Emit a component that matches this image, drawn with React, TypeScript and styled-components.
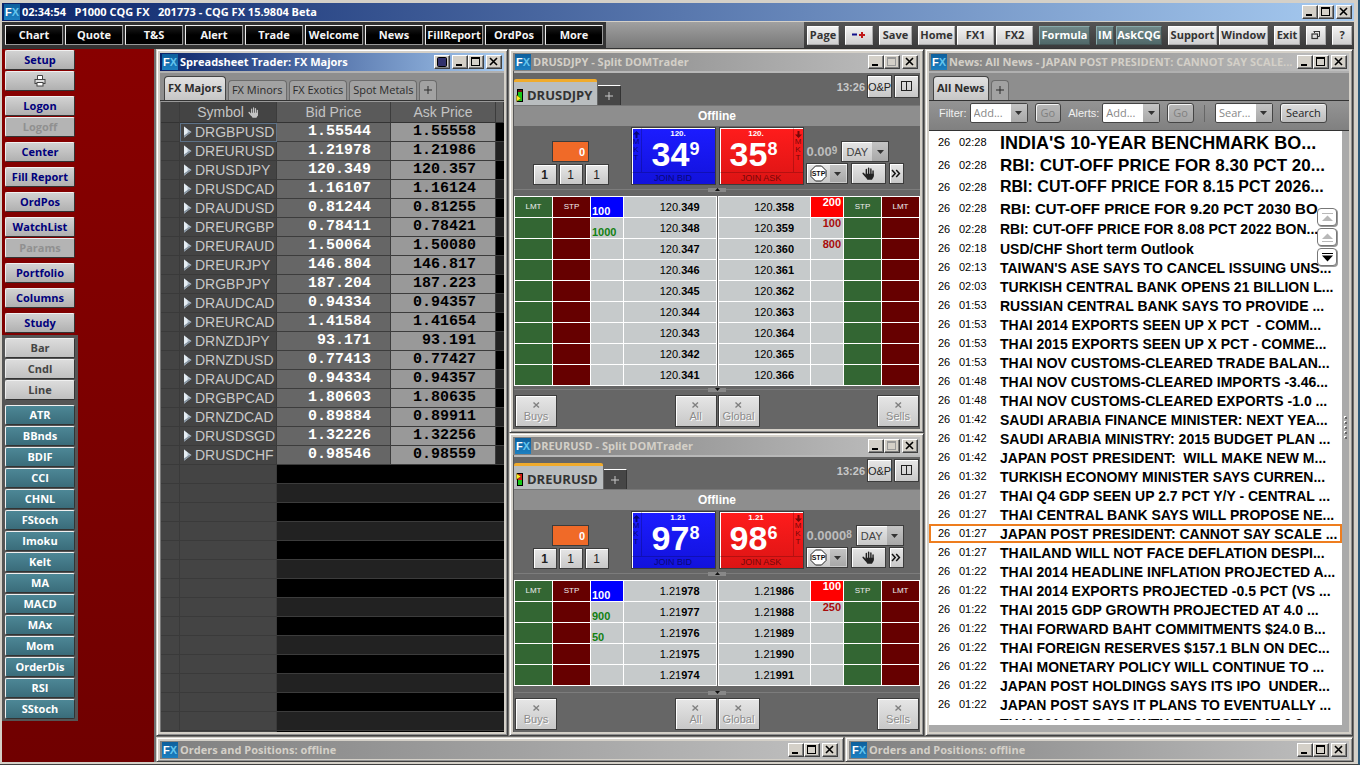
import React from "react";
import styled, { createGlobalStyle, css } from "styled-components";

const TAHOMA = `"Open Sans", "Noto Sans", sans-serif`;
const ARIAL = `"Liberation Sans", Arial, sans-serif`;
const MONO = `"Liberation Mono", "Courier New", monospace`;

const GlobalStyle = createGlobalStyle`
  * { box-sizing: border-box; }
  body { margin: 0; background: #d4d0c8; font: 11px/14px ${TAHOMA}; color: #000; }
  button, select, input { font: inherit; margin: 0; padding: 0; border-radius: 0; }
  button { cursor: pointer; }
  ul { margin: 0; padding: 0; list-style: none; }
`;

/* ---------- Application frame ---------- */

const AppFrame = styled.div`
  height: 100vh;
  display: flex;
  flex-direction: column;
  padding: 3px 4px 2px 2px;
  background: #d4d0c8;
  border-right: 2px solid #2b5878;
  border-bottom: 1px solid #404040;
  overflow: hidden;
`;

const Workspace = styled.div`
  flex: 1;
  min-height: 0;
  display: flex;
`;

/* ---------- Title bars ---------- */

const TitleBarBox = styled.header<{ $active?: boolean }>`
  flex: none;
  height: 18px;
  display: flex;
  align-items: center;
  gap: 2px;
  padding: 0 2px;
  font-weight: bold;
  color: ${(p) => (p.$active ? "#fff" : "#d4d0c8")};
  background: ${(p) =>
    p.$active
      ? "linear-gradient(90deg, #0a246a, #a6caf0)"
      : "linear-gradient(90deg, #808080, #c0c0c0)"};
`;

const TitleText = styled.h1`
  flex: 1;
  min-width: 0;
  margin: 0;
  font-size: 11px;
  line-height: 18px;
  font-weight: bold;
  white-space: pre;
  overflow: hidden;
`;

const Logo = styled.span`
  flex: none;
  width: 16px;
  height: 16px;
  text-align: center;
  font: bold 11px/16px ${ARIAL};
  color: #fff;
  background: linear-gradient(#0d5f9c, #1c7fc0);
  i {
    font-style: normal;
    color: #62c4ee;
  }
`;

const CaptionGroup = styled.span`
  display: flex;
`;

const CaptionButton = styled.button`
  width: 16px;
  height: 14px;
  display: flex;
  align-items: center;
  justify-content: center;
  background: #d4d0c8;
  color: #000;
  border: 1px solid;
  border-color: #fff #404040 #404040 #fff;
  box-shadow: inset -1px -1px #808080;
  &:disabled {
    color: #999;
  }
`;

const MinIcon = () => (
  <svg width="10" height="10" viewBox="0 0 10 10">
    <rect x="1" y="7" width="6" height="2" fill="currentColor" />
  </svg>
);
const MaxIcon = () => (
  <svg width="10" height="10" viewBox="0 0 10 10" shapeRendering="crispEdges">
    <path d="M0 0H9V9H0ZM1 2V8H8V2Z" fill="currentColor" fillRule="evenodd" />
  </svg>
);
const CloseIcon = () => (
  <svg width="10" height="10" viewBox="0 0 10 10">
    <path d="M1 1L8 8M8 1L1 8" stroke="currentColor" strokeWidth="1.6" />
  </svg>
);
const PinIcon = () => (
  <svg width="10" height="10" viewBox="0 0 10 10">
    <rect x="0.5" y="0.5" width="9" height="9" rx="1" fill="#31316b" stroke="#000" />
  </svg>
);

type TitleBarProps = {
  title: string;
  active?: boolean;
  pin?: boolean;
  maxDisabled?: boolean;
};

function TitleBar({ title, active, pin, maxDisabled }: TitleBarProps) {
  return (
    <TitleBarBox $active={active}>
      <Logo>
        F<i>X</i>
      </Logo>
      <TitleText>{title}</TitleText>
      {pin && (
        <CaptionButton aria-label="Link color">
          <PinIcon />
        </CaptionButton>
      )}
      <CaptionGroup>
        <CaptionButton aria-label="Minimize">
          <MinIcon />
        </CaptionButton>
        <CaptionButton aria-label="Maximize" disabled={maxDisabled}>
          <MaxIcon />
        </CaptionButton>
      </CaptionGroup>
      <CaptionButton aria-label="Close">
        <CloseIcon />
      </CaptionButton>
    </TitleBarBox>
  );
}

/* ---------- Top tool bar ---------- */

const ToolBar = styled.nav`
  flex: none;
  height: 28px;
  display: flex;
  justify-content: space-between;
  border-top: 1px solid #d4d0c8;
  border-bottom: 1px solid #333;
  background: linear-gradient(#a0a0a0, #787878);
`;

const MenuGroup = styled.div`
  display: flex;
  align-items: center;
  gap: 2px;
  padding: 0 3px;
  background: #333;
`;

const MenuButton = styled.button`
  width: 58px;
  height: 20px;
  font-weight: bold;
  color: #f4f4f4;
  background: linear-gradient(#1c1c1c, #000 50%);
  border: 1px solid #ddd;
  border-color: #eee #999 #999 #eee;
  white-space: nowrap;
`;

const ToolGroup = styled.div`
  flex: 0 0 550px;
  display: flex;
  align-items: center;
  justify-content: space-between;
  padding: 0 2px 0 3px;
  background: linear-gradient(#555, #3a3a3a);
`;

const ToolCluster = styled.div`
  display: flex;
  gap: 2px;
`;

const ToolButton = styled.button<{ $w: number; $teal?: boolean }>`
  width: ${(p) => p.$w}px;
  height: 19px;
  display: flex;
  align-items: center;
  justify-content: center;
  font-weight: bold;
  white-space: nowrap;
  color: ${(p) => (p.$teal ? "#fff" : "#333")};
  background: ${(p) =>
    p.$teal ? "linear-gradient(#708888, #506868)" : "linear-gradient(#f2f2f2, #cfcfcf)"};
  border: 1px solid;
  border-color: ${(p) => (p.$teal ? "#8aa #455 #455 #8aa" : "#fff #aaa #aaa #fff")};
`;

const menuItems = ["Chart", "Quote", "T&S", "Alert", "Trade", "Welcome", "News", "FillReport", "OrdPos", "More"];

type Tool = { label: React.ReactNode; w: number; teal?: boolean; name?: string };

const PlusMinus = () => (
  <svg width="16" height="10" viewBox="0 0 16 10">
    <path d="M1 4.5H6" stroke="#11118a" strokeWidth="2" />
    <path d="M8 5H14M11 2V8" stroke="#c01818" strokeWidth="2" />
  </svg>
);
const RestoreIcon = () => (
  <svg width="10" height="10" viewBox="0 0 10 10" fill="none" stroke="#333">
    <path d="M3.5 3V1.5H8.5V6.5H7" />
    <path d="M2.5 1.5H9" strokeWidth="1" />
    <rect x="1" y="4" width="5.5" height="4.5" strokeWidth="1.2" />
  </svg>
);

const toolClusters: Tool[][] = [
  [{ label: "Page", w: 32 }],
  [{ label: <PlusMinus />, w: 28, name: "Add or remove page" }],
  [{ label: "Save", w: 33 }],
  [{ label: "Home", w: 37 }, { label: "FX1", w: 37 }, { label: "FX2", w: 37 }],
  [{ label: "Formula", w: 51, teal: true }],
  [{ label: "IM", w: 18, teal: true }, { label: "AskCQG", w: 46, teal: true }],
  [{ label: "Support", w: 49 }, { label: "Window", w: 49 }],
  [{ label: "Exit", w: 26 }],
  [{ label: <RestoreIcon />, w: 20, name: "Restore" }],
  [{ label: "?", w: 20 }],
];

/* ---------- Sidebar ---------- */

const Sidebar = styled.aside`
  flex: 0 0 152px;
  overflow: hidden;
  background: linear-gradient(#880000, #700000);
`;

const SideSection = styled.div<{ $gray?: boolean }>`
  width: 76px;
  display: flex;
  flex-direction: column;
  gap: 5px;
  padding: ${(p) => (p.$gray ? "3px 3px 2px" : "1px 3px 2px")};
  background: ${(p) => (p.$gray ? "#555" : "transparent")};
`;

const SideGroup = styled.div`
  display: flex;
  flex-direction: column;
  gap: 1px;
`;

type SideKind = "navy" | "off" | "plain" | "teal";

const sideLook = {
  navy: css`
    color: #00007c;
    background: linear-gradient(#d2d2d2, #b0b0b0);
  `,
  off: css`
    color: #909090;
    background: #b4b4b4;
  `,
  plain: css`
    color: #444;
    background: linear-gradient(#dcdcdc, #c0c0c0);
  `,
  teal: css`
    color: #fff;
    background: linear-gradient(#4d8796, #3a6c7a);
  `,
};

const SideButton = styled.button<{ $kind: SideKind }>`
  height: 20px;
  width: 70px;
  display: flex;
  align-items: center;
  justify-content: center;
  font-size: 11px;
  font-weight: bold;
  border: 1px solid;
  border-color: #f0f0f0 #333 #333 #f0f0f0;
  border-radius: 2px;
  ${(p) => sideLook[p.$kind]}
`;

const PrinterIcon = () => (
  <svg width="12" height="12" viewBox="0 0 12 12" fill="none" stroke="#444">
    <path d="M3.5 4.5V0.5H8.5V4.5" fill="#fff" />
    <rect x="1" y="4.5" width="10" height="4" fill="#ddd" />
    <rect x="3" y="7.5" width="6" height="3.5" fill="#fff" />
  </svg>
);

type SideItem = { label: string; kind: SideKind };
const n = (label: string): SideItem => ({ label, kind: "navy" });
const off = (label: string): SideItem => ({ label, kind: "off" });

const commandGroups: SideItem[][] = [
  [n("Setup"), n("Print")],
  [n("Logon"), off("Logoff")],
  [n("Center")],
  [n("Fill Report")],
  [n("OrdPos")],
  [n("WatchList"), off("Params")],
  [n("Portfolio")],
  [n("Columns")],
  [n("Study")],
];
const studyGroups: SideItem[][] = [
  ["Bar", "Cndl", "Line"].map((label) => ({ label, kind: "plain" as const })),
  ["ATR", "BBnds", "BDIF", "CCI", "CHNL", "FStoch", "Imoku", "Kelt", "MA", "MACD", "MAx", "Mom", "OrderDis", "RSI", "SStoch"].map(
    (label) => ({ label, kind: "teal" as const })
  ),
];

function SideGroups({ groups }: { groups: SideItem[][] }) {
  return (
    <>
      {groups.map((g) => (
        <SideGroup key={g[0].label}>
          {g.map((b) => (
            <SideButton key={b.label} $kind={b.kind} disabled={b.kind === "off"} aria-label={b.label}>
              {b.label === "Print" ? <PrinterIcon /> : b.label}
            </SideButton>
          ))}
        </SideGroup>
      ))}
    </>
  );
}

/* ---------- Desktop and windows ---------- */

const Desktop = styled.main`
  flex: 1;
  min-width: 0;
  display: flex;
  flex-direction: column;
  gap: 1px;
  padding: 0 1px 0 2px;
  background: #707070;
`;

const MainRow = styled.div`
  flex: 1;
  min-height: 0;
  display: grid;
  grid-template-columns: minmax(0, 352fr) minmax(0, 415fr) minmax(0, 428fr);
  grid-template-rows: minmax(0, 1fr);
  column-gap: 1px;
`;

const OrdersRow = styled.div`
  flex: none;
  height: 25px;
  overflow: hidden;
  display: grid;
  grid-template-columns: minmax(0, 688fr) minmax(0, 508fr);
  column-gap: 1px;
`;

const Column = styled.div`
  display: flex;
  flex-direction: column;
  min-height: 0;
`;

const Window = styled.section<{ $fill?: boolean }>`
  flex: ${(p) => (p.$fill ? "1" : "none")};
  min-height: 0;
  display: flex;
  flex-direction: column;
  padding: 3px;
  background: #d4d0c8;
  border: 1px solid;
  border-color: #d4d0c8 #404040 #404040 #d4d0c8;
  box-shadow: inset 1px 1px #fff, inset -1px -1px #909090;
`;

const TabStrip = styled.div`
  flex: none;
  height: 30px;
  display: flex;
  align-items: flex-end;
  gap: 2px;
  padding: 0 4px;
  background: #8e8e8e;
  border-top: 2px solid #b0b0b0;
  border-bottom: 1px solid #333;
`;

const Tab = styled.button<{ $on?: boolean }>`
  height: ${(p) => (p.$on ? 24 : 20)}px;
  padding: 0 3px 1px;
  white-space: nowrap;
  color: #2c2c2c;
  font-weight: ${(p) => (p.$on ? "bold" : "normal")};
  background: ${(p) => (p.$on ? "linear-gradient(#e2e2e2, #c6c6c6)" : "#a2a2a2")};
  border: 1px solid ${(p) => (p.$on ? "#444" : "#6c6c6c")};
  border-bottom: 0;
  border-radius: 4px 4px 0 0;
`;

const PlusTab = styled(Tab)`
  width: 18px;
`;

const PlusIcon = () => (
  <svg width="8" height="8" viewBox="0 0 8 8">
    <path d="M0 4H8M4 0V8" stroke="currentColor" />
  </svg>
);

/* ---------- Hand icon, used in the grid header and the order panel ---------- */

const HandIcon = ({ size }: { size: number }) => (
  <svg width={size} height={size} viewBox="0 0 12 12" fill="none" stroke="currentColor" strokeLinecap="round">
    <path d="M4 2.2V7M6.1 1V7M8.2 1.8V7M10.2 3.6V8" strokeWidth="1.3" />
    <path d="M1.2 6L3.6 8.6" strokeWidth="1.6" />
    <path d="M3.3 6.2H10.8V9L9.2 11.8H5L3.2 9Z" fill="currentColor" stroke="none" />
  </svg>
);

/* ---------- Spreadsheet trader ---------- */

const SheetArea = styled.div`
  flex: 1;
  min-height: 0;
  overflow: hidden;
  background: #444;
  border-top: 1px solid #999;
  border-left: 1px solid #777;
`;

const Sheet = styled.table`
  width: 100%;
  table-layout: fixed;
  border-collapse: separate;
  border-spacing: 0;
`;

const SheetHead = styled.th<{ $dark?: boolean }>`
  height: 21px;
  padding: 0;
  font: 14px/20px ${ARIAL};
  color: #c4c4c4;
  background: ${(p) => (p.$dark ? "#444" : "#5a5a5a")};
  border-right: 1px solid #3c3c3c;
  border-bottom: 1px solid #333;
  white-space: nowrap;
  svg {
    vertical-align: -1px;
  }
`;

const SheetCell = styled.td`
  height: 19px;
  padding: 0;
  border-bottom: 1px solid #3a3a3a;
`;

const RowHeadCell = styled(SheetCell)`
  background: #444;
  border-right: 1px solid #3a3a3a;
`;

const SymbolCell = styled(RowHeadCell)<{ $focus?: boolean }>`
  padding-left: 3px;
  font: 14px/18px ${ARIAL};
  color: #c8c8c8;
  white-space: nowrap;
  outline: ${(p) => (p.$focus ? "1px solid #5d7288" : "none")};
  outline-offset: -1px;
  svg {
    margin-right: 3px;
    vertical-align: -1px;
  }
`;

const PriceCell = styled(SheetCell)<{ $side: "bid" | "ask" }>`
  padding-right: 19px;
  text-align: right;
  font: bold 15px/18px ${MONO};
  color: ${(p) => (p.$side === "bid" ? "#fff" : "#000")};
  background: ${(p) => (p.$side === "bid" ? "#666" : "#999")};
  border-right: 1px solid #3c3c3c;
  border-bottom-color: #3c3c3c;
`;

const BlankCell = styled(SheetCell)<{ $odd: boolean }>`
  background: ${(p) => (p.$odd ? "#222" : "#000")};
  border-bottom-color: #3c3c3c;
`;

const RowArrow = () => (
  <svg width="9" height="12" viewBox="0 0 9 12">
    <path d="M1 0.5L8.5 6L1 11.5Z" fill="#b9c6d2" />
    <path d="M1 0.5L4.5 3.5V8.5L1 11.5Z" fill="#e6eef4" />
    <path d="M8.5 6L1 11.5V9.5L6 6Z" fill="#8593a0" />
  </svg>
);

const quotes: [string, string, string][] = [
  ["DRGBPUSD", "1.55544", "1.55558"],
  ["DREURUSD", "1.21978", "1.21986"],
  ["DRUSDJPY", "120.349", "120.357"],
  ["DRUSDCAD", "1.16107", "1.16124"],
  ["DRAUDUSD", "0.81244", "0.81255"],
  ["DREURGBP", "0.78411", "0.78421"],
  ["DREURAUD", "1.50064", "1.50080"],
  ["DREURJPY", "146.804", "146.817"],
  ["DRGBPJPY", "187.204", "187.223"],
  ["DRAUDCAD", "0.94334", "0.94357"],
  ["DREURCAD", "1.41584", "1.41654"],
  ["DRNZDJPY", "93.171", "93.191"],
  ["DRNZDUSD", "0.77413", "0.77427"],
  ["DRAUDCAD", "0.94334", "0.94357"],
  ["DRGBPCAD", "1.80603", "1.80635"],
  ["DRNZDCAD", "0.89884", "0.89911"],
  ["DRUSDSGD", "1.32226", "1.32256"],
  ["DRUSDCHF", "0.98546", "0.98559"],
];
const BLANK_ROWS = 40;

function SpreadsheetWindow() {
  return (
    <Window>
      <TitleBar title="Spreadsheet Trader: FX Majors" active pin />
      <TabStrip>
        <Tab $on>FX Majors</Tab>
        <Tab>FX Minors</Tab>
        <Tab>FX Exotics</Tab>
        <Tab>Spot Metals</Tab>
        <PlusTab aria-label="Add tab">
          <PlusIcon />
        </PlusTab>
      </TabStrip>
      <SheetArea>
        <Sheet>
          <colgroup>
            <col width="19" />
            <col width="97" />
            <col width="114" />
            <col width="105" />
            <col />
          </colgroup>
          <thead>
            <tr>
              <SheetHead $dark />
              <SheetHead $dark>
                Symbol <HandIcon size={11} />
              </SheetHead>
              <SheetHead>Bid Price</SheetHead>
              <SheetHead>Ask Price</SheetHead>
              <SheetHead />
            </tr>
          </thead>
          <tbody>
            {quotes.map(([symbol, bid, ask], i) => (
              <tr key={i}>
                <RowHeadCell />
                <SymbolCell $focus={i === 0}>
                  <RowArrow />
                  {symbol}
                </SymbolCell>
                <PriceCell $side="bid">{bid}</PriceCell>
                <PriceCell $side="ask">{ask}</PriceCell>
                <BlankCell $odd={i % 2 === 1} />
              </tr>
            ))}
            {Array.from({ length: BLANK_ROWS }, (_, i) => (
              <tr key={`blank-${i}`}>
                <RowHeadCell />
                <RowHeadCell />
                <BlankCell $odd={i % 2 === 1} colSpan={3} />
              </tr>
            ))}
          </tbody>
        </Sheet>
      </SheetArea>
    </Window>
  );
}

/* ---------- Split DOMTrader ---------- */

const DomBody = styled.div`
  flex: 1;
  display: flex;
  flex-direction: column;
  background: #666;
  border-left: 1px solid #555;
`;

const DomHeader = styled.div`
  height: 34px;
  display: flex;
  justify-content: space-between;
  border-top: 2px solid #b8b8b8;
`;

const DomTabs = styled.div`
  display: flex;
  align-items: flex-end;
  gap: 1px;
`;

const DomTab = styled.button`
  height: 26px;
  display: flex;
  align-items: center;
  gap: 3px;
  padding: 3px 5px 0 2px;
  font-size: 13px;
  font-weight: bold;
  color: #333;
  background: #b9bdbf;
  border: 0;
  border-top: 3px solid #f0ab2c;
  border-radius: 2px 2px 0 0;
`;

const DomPlus = styled.button`
  width: 23px;
  height: 20px;
  display: flex;
  align-items: center;
  justify-content: center;
  color: #c8c8c8;
  background: #464646;
  border: 0;
  border-top: 1px solid #fff;
  border-right: 1px solid #333;
`;

const DomTools = styled.div`
  display: flex;
  align-items: center;
  gap: 2px;
  padding: 0 1px 5px 0;
  font: bold 11px/14px ${ARIAL};
  color: #c8c8c8;
`;

const Face = css`
  color: #222;
  background: linear-gradient(#e6e6e6, #c8c8c8);
  border: 1px solid #3c3c3c;
  box-shadow: inset 1px 1px #fff;
`;

const SquareButton = styled.button`
  ${Face}
  width: 25px;
  height: 23px;
  display: flex;
  align-items: center;
  justify-content: center;
  font: 11px/14px ${ARIAL};
`;

const StatusBand = styled.div`
  height: 21px;
  text-align: center;
  font: bold 12px/20px ${ARIAL};
  color: #fff;
  background: #8e8e8e;
  border-top: 1px solid #777;
`;

const DomControls = styled.div`
  height: 60px;
  padding-top: 1px;
  display: grid;
  grid-template-columns: 1fr 173px 1fr;
`;

const QtyPanel = styled.div`
  justify-self: end;
  display: flex;
  flex-direction: column;
  align-items: center;
  padding: 14px 22px 0 0;
  gap: 2px;
`;

const QtyBox = styled.input`
  width: 37px;
  height: 21px;
  padding: 0 3px;
  text-align: right;
  font: bold 11px/18px ${ARIAL};
  color: #fff;
  background: #f06a28;
  border: 1px solid #3c3c3c;
`;

const QtyRow = styled.div`
  display: flex;
  gap: 2px;
`;

const QtyButton = styled.button<{ $bold?: boolean }>`
  ${Face}
  width: 24px;
  height: 21px;
  font: ${(p) => (p.$bold ? "bold" : "normal")} 12px/14px ${ARIAL};
`;

const TradePair = styled.div`
  display: grid;
  grid-template-columns: 1fr 1fr;
  gap: 3px;
`;

const TradeButton = styled.button<{ $side: "bid" | "ask" }>`
  height: 58px;
  display: grid;
  grid-template-columns: ${(p) => (p.$side === "bid" ? "10px 1fr" : "1fr 10px")};
  grid-template-rows: 1fr 12px;
  color: #fff;
  font-family: ${ARIAL};
  background: ${(p) =>
    p.$side === "bid" ? "linear-gradient(#1c1cff, #1212dc)" : "linear-gradient(#ff1c1c, #dc1414)"};
  border: 1px solid #3c3c3c;
  box-shadow: inset 1px 1px #fff;
`;

const sideInk = { bid: "#080876", ask: "#760808" };

const MktStrip = styled.span<{ $side: "bid" | "ask" }>`
  order: ${(p) => (p.$side === "bid" ? 0 : 1)};
  padding-top: 3px;
  display: flex;
  flex-direction: column;
  align-items: center;
  font: 8px/8px ${ARIAL};
  color: ${(p) => sideInk[p.$side]};
  border: 0 solid rgba(0, 0, 0, 0.2);
  border-width: ${(p) => (p.$side === "bid" ? "0 1px 0 0" : "0 0 0 1px")};
`;

const Pips = styled.span`
  display: flex;
  flex-direction: column;
  align-items: center;
  padding-top: 1px;
  font: bold 8px/9px ${ARIAL};
`;

const PipDigits = styled.span`
  display: flex;
  align-items: flex-start;
  padding-right: 5px;
  font: bold 34px/32px ${ARIAL};
  sup {
    font-size: 18px;
    line-height: 22px;
  }
`;

const JoinLabel = styled.span<{ $side: "bid" | "ask" }>`
  order: 2;
  grid-column: 1 / -1;
  font: 9px/11px ${ARIAL};
  color: ${(p) => sideInk[p.$side]};
  border-top: 1px solid rgba(0, 0, 0, 0.2);
`;

const OrderPanel = styled.div`
  display: flex;
  flex-direction: column;
  gap: 1px;
  padding: 14px 0 0 2px;
`;

const OrderRow = styled.div`
  display: flex;
  align-items: center;
  gap: 3px;
`;

const Spread = styled.span`
  display: flex;
  align-items: flex-start;
  padding: 0 1px;
  font: bold 13px/18px ${ARIAL};
  color: #bcbcbc;
  white-space: nowrap;
  sup {
    font-size: 10px;
    line-height: 15px;
  }
`;

const ArrowBox = styled.span`
  position: absolute;
  top: 1px;
  right: 1px;
  bottom: 1px;
  width: 16px;
  display: flex;
  align-items: center;
  justify-content: center;
  background: linear-gradient(#c4c4c4, #a8a8a8);
  pointer-events: none;
`;

const Down = () => (
  <svg width="7" height="4" viewBox="0 0 7 4">
    <path d="M0 0H7L3.5 4Z" fill="#333" />
  </svg>
);

const DropWrap = styled.label<{ $w: number }>`
  position: relative;
  display: block;
  width: ${(p) => p.$w}px;
`;

const DaySelect = styled.select`
  ${Face}
  appearance: none;
  width: 100%;
  height: 21px;
  padding-left: 4px;
  font: 11px/18px ${ARIAL};
  color: #444;
`;

const PanelButton = styled.button<{ $w: number }>`
  ${Face}
  position: relative;
  width: ${(p) => p.$w}px;
  height: 21px;
  display: flex;
  align-items: center;
  justify-content: center;
  ${(p) => p.$w > 40 && "justify-content: flex-start; padding-left: 3px;"}
`;

const StopSign = () => (
  <svg width="17" height="17" viewBox="0 0 17 17">
    <path d="M5.5 1H11.5L16 5.5V11.5L11.5 16H5.5L1 11.5V5.5Z" fill="#fff" stroke="#222" />
    <text x="8.5" y="11" textAnchor="middle" fontFamily="Liberation Sans" fontSize="7" fontWeight="bold" fill="#111">
      STP
    </text>
  </svg>
);

const SplitterBox = styled.div`
  height: 7px;
  display: flex;
  align-items: center;
  &::before,
  &::after {
    content: "";
    flex: 1;
    height: 1px;
    background: #7c7c7c;
  }
`;

const SplitterGrip = styled.span`
  width: 18px;
  height: 4px;
  display: flex;
  align-items: center;
  justify-content: center;
  background: #888;
`;

function Splitter({ up }: { up?: boolean }) {
  return (
    <SplitterBox>
      <SplitterGrip>
        <svg width="5" height="3" viewBox="0 0 5 3">
          <path d={up ? "M0 3H5L2.5 0Z" : "M0 0H5L2.5 3Z"} fill="#111" />
        </svg>
      </SplitterGrip>
    </SplitterBox>
  );
}

const Ladders = styled.div`
  display: grid;
  grid-template-columns: 1fr 1fr;
  gap: 1px;
  margin-top: 3px;
`;

const Ladder = styled.table`
  width: 100%;
  table-layout: fixed;
  border-collapse: separate;
  border-spacing: 1px;
  background: #fff;
`;

const OrderCell = styled.td<{ $tone: "green" | "maroon" }>`
  height: 20px;
  padding: 0;
  text-align: center;
  font: 8px/18px ${ARIAL};
  color: #eee;
  background: ${(p) => (p.$tone === "green" ? "#336633" : "#660000")};
`;

const SizeCell = styled.td<{ $side: "bid" | "ask"; $best: boolean }>`
  padding: ${(p) => (p.$side === "bid" ? "0 1px" : "0 2px")};
  font: bold 11px/11px ${ARIAL};
  vertical-align: ${(p) => (p.$side === "bid" ? "bottom" : "top")};
  text-align: ${(p) => (p.$side === "bid" ? "left" : "right")};
  color: ${(p) => (p.$best ? "#fff" : p.$side === "bid" ? "#128012" : "#a80c0c")};
  background: ${(p) => (!p.$best ? "#c6cacb" : p.$side === "bid" ? "#0000ff" : "#ff0000")};
`;

const LevelCell = styled.td`
  padding: 0 16px 0 0;
  text-align: right;
  font: 11px/18px ${ARIAL};
  background: #c6cacb;
`;

const DomFooter = styled.div`
  margin-top: auto;
`;

const CancelBar = styled.div`
  display: grid;
  grid-template-columns: 1fr auto 1fr;
  padding: 2px 1px 2px;
`;

const CancelPair = styled.div`
  display: flex;
  gap: 1px;
`;

const CancelButton = styled.button<{ $end?: boolean }>`
  ${Face}
  width: 42px;
  height: 32px;
  justify-self: ${(p) => (p.$end ? "end" : "start")};
  display: flex;
  flex-direction: column;
  align-items: center;
  justify-content: center;
  gap: 2px;
  padding-top: 3px;
  font: 11px/13px ${ARIAL};
  color: #8c8c8c;
  text-shadow: 1px 1px #fff;
`;

const CrossMark = () => (
  <svg width="7" height="6" viewBox="0 0 7 6">
    <path d="M0.5 0.5L6 5.5M6 0.5L0.5 5.5" stroke="#808080" strokeWidth="1.4" />
  </svg>
);

const TrafficLight = ({ flip }: { flip?: boolean }) => (
  <svg width="8" height="13" viewBox="0 0 8 13">
    <rect x="1.5" y="0.5" width="5" height="12" fill="#18c818" stroke="#000" />
    <rect x="2" y="1" width="4" height={flip ? 6 : 2} fill={flip ? "#d81818" : "#701010"} />
    <path d={flip ? "M0.5 0.5L5 3.5L0.5 6.5Z" : "M0.5 6L5 9.5L0.5 12.5Z"} fill="#ffee20" stroke="#665500" strokeWidth="0.5" />
  </svg>
);

type Level = { price: [string, string]; size?: string };
type DomProps = {
  symbol: string;
  handle: string;
  bidPips: [string, string];
  askPips: [string, string];
  spread: [string, string];
  bids: Level[];
  asks: Level[];
  fill?: boolean;
};

function LevelText({ level }: { level: Level }) {
  return (
    <>
      {level.price[0]}
      <b>{level.price[1]}</b>
    </>
  );
}

function TradeSide({ side, handle, pips }: { side: "bid" | "ask"; handle: string; pips: [string, string] }) {
  return (
    <TradeButton $side={side}>
      <MktStrip $side={side}>
        <svg width="7" height="7" viewBox="0 0 7 7">
          <path
            d={side === "bid" ? "M3.5 0L7 3.5H4.5V7H2.5V3.5H0Z" : "M3.5 7L0 3.5H2.5V0H4.5V3.5H7Z"}
            fill="currentColor"
          />
        </svg>
        <span>M</span>
        <span>K</span>
        <span>T</span>
      </MktStrip>
      <Pips>
        {handle}
        <PipDigits>
          {pips[0]}
          <sup>{pips[1]}</sup>
        </PipDigits>
      </Pips>
      <JoinLabel $side={side}>{side === "bid" ? "JOIN BID" : "JOIN ASK"}</JoinLabel>
    </TradeButton>
  );
}

function DomWindow({ symbol, handle, bidPips, askPips, spread, bids, asks, fill }: DomProps) {
  return (
    <Window $fill={fill}>
      <TitleBar title={`${symbol} - Split DOMTrader`} maxDisabled />
      <DomBody>
        <DomHeader>
          <DomTabs>
            <DomTab>
              <TrafficLight flip={fill} />
              {symbol}
            </DomTab>
            <DomPlus aria-label="Add tab">
              <PlusIcon />
            </DomPlus>
          </DomTabs>
          <DomTools>
            13:26
            <SquareButton>O&amp;P</SquareButton>
            <SquareButton aria-label="Split view">
              <svg width="12" height="11" viewBox="0 0 12 11" fill="none" stroke="#222">
                <rect x="0.5" y="0.5" width="10" height="9" />
                <path d="M5.5 0V10" />
              </svg>
            </SquareButton>
          </DomTools>
        </DomHeader>
        <StatusBand>Offline</StatusBand>
        <DomControls>
          <QtyPanel>
            <QtyBox aria-label="Order quantity" defaultValue="0" />
            <QtyRow>
              <QtyButton $bold>1</QtyButton>
              <QtyButton>1</QtyButton>
              <QtyButton>1</QtyButton>
            </QtyRow>
          </QtyPanel>
          <TradePair>
            <TradeSide side="bid" handle={handle} pips={bidPips} />
            <TradeSide side="ask" handle={handle} pips={askPips} />
          </TradePair>
          <OrderPanel>
            <OrderRow>
              <Spread>
                {spread[0]}
                <sup>{spread[1]}</sup>
              </Spread>
              <DropWrap $w={48}>
                <DaySelect aria-label="Duration">
                  <option>DAY</option>
                </DaySelect>
                <ArrowBox>
                  <Down />
                </ArrowBox>
              </DropWrap>
            </OrderRow>
            <OrderRow>
              <PanelButton $w={42} aria-label="Order type">
                <StopSign />
                <ArrowBox>
                  <Down />
                </ArrowBox>
              </PanelButton>
              <PanelButton $w={35} aria-label="Hold">
                <HandIcon size={13} />
              </PanelButton>
              <PanelButton $w={15} aria-label="More">
                <svg width="10" height="9" viewBox="0 0 10 9" fill="none" stroke="#111" strokeWidth="1.5">
                  <path d="M1 1L4.2 4.5L1 8M5.2 1L8.4 4.5L5.2 8" />
                </svg>
              </PanelButton>
            </OrderRow>
          </OrderPanel>
        </DomControls>
        <Splitter up />
        <Ladders>
          <Ladder>
            <colgroup>
              <col width="37" />
              <col width="37" />
              <col width="32" />
              <col />
            </colgroup>
            <tbody>
              {bids.map((b, i) => (
                <tr key={b.price[1]}>
                  <OrderCell $tone="green">{i === 0 && "LMT"}</OrderCell>
                  <OrderCell $tone="maroon">{i === 0 && "STP"}</OrderCell>
                  <SizeCell $side="bid" $best={i === 0}>
                    {b.size}
                  </SizeCell>
                  <LevelCell>
                    <LevelText level={b} />
                  </LevelCell>
                </tr>
              ))}
            </tbody>
          </Ladder>
          <Ladder>
            <colgroup>
              <col />
              <col width="32" />
              <col width="37" />
              <col width="37" />
            </colgroup>
            <tbody>
              {asks.map((a, i) => (
                <tr key={a.price[1]}>
                  <LevelCell>
                    <LevelText level={a} />
                  </LevelCell>
                  <SizeCell $side="ask" $best={i === 0}>
                    {a.size}
                  </SizeCell>
                  <OrderCell $tone="green">{i === 0 && "STP"}</OrderCell>
                  <OrderCell $tone="maroon">{i === 0 && "LMT"}</OrderCell>
                </tr>
              ))}
            </tbody>
          </Ladder>
        </Ladders>
        <DomFooter>
          <Splitter />
          <CancelBar>
            <CancelButton>
              <CrossMark />
              Buys
            </CancelButton>
            <CancelPair>
              <CancelButton>
                <CrossMark />
                All
              </CancelButton>
              <CancelButton>
                <CrossMark />
                Global
              </CancelButton>
            </CancelPair>
            <CancelButton $end>
              <CrossMark />
              Sells
            </CancelButton>
          </CancelBar>
        </DomFooter>
      </DomBody>
    </Window>
  );
}

const levels = (head: string, tails: string[], sizes: string[]): Level[] =>
  tails.map((t, i) => ({ price: [head, t], size: sizes[i] }));

/* ---------- News ---------- */

const FilterBar = styled.div`
  flex: none;
  height: 30px;
  display: flex;
  align-items: center;
  padding: 0 12px 5px 10px;
  gap: 7px;
  background: linear-gradient(#949494, #808080);
  border-bottom: 1px solid #333;
  font: 11px/18px ${ARIAL};
  color: #f0f0f0;
`;

const FilterGroup = styled.div`
  display: flex;
  align-items: center;
  gap: 7px;
`;

const FilterLabel = styled.label`
  display: flex;
  align-items: center;
  gap: 3px;
`;

const ComboBox = styled.span`
  position: relative;
  display: block;
  width: 58px;
`;

const ComboSelect = styled.select`
  appearance: none;
  width: 100%;
  height: 20px;
  padding-left: 3px;
  color: #888;
  background: #fff;
  border: 1px solid #444;
  border-radius: 2px;
  font: 11px/16px ${TAHOMA};
`;

const BarButton = styled.button`
  height: 20px;
  padding: 0 5px;
  color: #222;
  background: linear-gradient(#dedede, #bcbcbc);
  border: 1px solid #444;
  border-radius: 3px;
  box-shadow: inset 1px 1px #f4f4f4;
  font: 11px/14px ${TAHOMA};
  &:disabled {
    color: #808080;
    background: linear-gradient(#b8b8b8, #a4a4a4);
  }
`;

const BarDivider = styled.span`
  width: 1px;
  height: 17px;
  margin: 0 3px;
  background: #666;
`;

function Combo({ name, value }: { name: string; value: string }) {
  return (
    <ComboBox>
      <ComboSelect aria-label={name}>
        <option>{value}</option>
      </ComboSelect>
      <ArrowBox>
        <Down />
      </ArrowBox>
    </ComboBox>
  );
}

const NewsBody = styled.div`
  flex: 1;
  min-height: 0;
  position: relative;
  display: flex;
  align-items: stretch;
  padding-bottom: 7px;
  background: #aaa;
`;

const NewsPane = styled.div`
  flex: 1;
  min-width: 0;
  display: flex;
  padding-bottom: 5px;
  background: #fff;
`;

const NewsList = styled.ul`
  flex: 1;
  min-width: 0;
  overflow: hidden;
`;

const NewsRow = styled.li<{ $h: number; $selected?: boolean }>`
  height: ${(p) => p.$h}px;
  display: grid;
  grid-template-columns: 21px 41px minmax(0, 1fr);
  align-items: center;
  padding-left: 9px;
  font: 11px/15px ${ARIAL};
  outline: ${(p) => (p.$selected ? "2px solid #ee7d1e" : "none")};
  outline-offset: -2px;
  white-space: pre;
`;

const Headline = styled.a<{ $size: number }>`
  font-size: ${(p) => p.$size}px;
  line-height: ${(p) => p.$size}px;
  font-weight: bold;
  color: #000;
  text-decoration: none;
`;

const PaneGrip = styled.span`
  flex: 0 0 7px;
  display: flex;
  align-items: center;
  justify-content: center;
`;

const ScrollPad = styled.div`
  position: absolute;
  right: 12px;
  top: 77px;
  display: flex;
  flex-direction: column;
  gap: 2px;
`;

const ScrollButton = styled.button`
  width: 20px;
  height: 18px;
  display: flex;
  align-items: center;
  justify-content: center;
  color: #000;
  background: #fff;
  border: 1px solid #777;
  border-radius: 4px;
  box-shadow: 1px 1px #999;
  &:disabled {
    color: #b8b8b8;
  }
`;

const headlines: [string, string][] = [
  ["02:28", "INDIA'S 10-YEAR BENCHMARK BO..."],
  ["02:28", "RBI: CUT-OFF PRICE FOR 8.30 PCT 20..."],
  ["02:28", "RBI: CUT-OFF PRICE FOR 8.15 PCT 2026..."],
  ["02:28", "RBI: CUT-OFF PRICE FOR 9.20 PCT 2030 BO..."],
  ["02:28", "RBI: CUT-OFF PRICE FOR 8.08 PCT 2022 BON..."],
  ["02:18", "USD/CHF Short term Outlook"],
  ["02:13", "TAIWAN'S ASE SAYS TO CANCEL ISSUING UNS..."],
  ["02:03", "TURKISH CENTRAL BANK OPENS 21 BILLION L..."],
  ["01:53", "RUSSIAN CENTRAL BANK SAYS TO PROVIDE ..."],
  ["01:53", "THAI 2014 EXPORTS SEEN UP X PCT  - COMM..."],
  ["01:53", "THAI 2015 EXPORTS SEEN UP X PCT - COMME..."],
  ["01:53", "THAI NOV CUSTOMS-CLEARED TRADE BALAN..."],
  ["01:48", "THAI NOV CUSTOMS-CLEARED IMPORTS -3.46..."],
  ["01:48", "THAI NOV CUSTOMS-CLEARED EXPORTS -1.0 ..."],
  ["01:42", "SAUDI ARABIA FINANCE MINISTER: NEXT YEA..."],
  ["01:42", "SAUDI ARABIA MINISTRY: 2015 BUDGET PLAN ..."],
  ["01:42", "JAPAN POST PRESIDENT:  WILL MAKE NEW M..."],
  ["01:32", "TURKISH ECONOMY MINISTER SAYS CURREN..."],
  ["01:27", "THAI Q4 GDP SEEN UP 2.7 PCT Y/Y - CENTRAL ..."],
  ["01:27", "THAI CENTRAL BANK SAYS WILL PROPOSE NE..."],
  ["01:27", "JAPAN POST PRESIDENT: CANNOT SAY SCALE ..."],
  ["01:27", "THAILAND WILL NOT FACE DEFLATION DESPI..."],
  ["01:22", "THAI 2014 HEADLINE INFLATION PROJECTED A..."],
  ["01:22", "THAI 2014 EXPORTS PROJECTED -0.5 PCT (VS ..."],
  ["01:22", "THAI 2015 GDP GROWTH PROJECTED AT 4.0 ..."],
  ["01:22", "THAI FORWARD BAHT COMMITMENTS $24.0 B..."],
  ["01:22", "THAI FOREIGN RESERVES $157.1 BLN ON DEC..."],
  ["01:22", "THAI MONETARY POLICY WILL CONTINUE TO ..."],
  ["01:22", "JAPAN POST HOLDINGS SAYS ITS IPO  UNDER..."],
  ["01:22", "JAPAN POST SAYS IT PLANS TO EVENTUALLY ..."],
  ["", "THAI 2014 GDP GROWTH PROJECTED AT 0.8 ..."],
];
const SELECTED = 20;
const leadRows = [
  { size: 18, h: 23 },
  { size: 17, h: 22 },
  { size: 16, h: 22 },
  { size: 15, h: 21 },
  { size: 14, h: 20 },
];

function NewsWindow() {
  return (
    <Window>
      <TitleBar title="News: All News - JAPAN POST PRESIDENT: CANNOT SAY SCALE..." />
      <TabStrip>
        <Tab $on>All News</Tab>
        <PlusTab aria-label="Add tab">
          <PlusIcon />
        </PlusTab>
      </TabStrip>
      <FilterBar>
        <FilterGroup>
          <FilterLabel>
            Filter:
            <Combo name="Filter" value="Add..." />
          </FilterLabel>
          <BarButton disabled>Go</BarButton>
        </FilterGroup>
        <FilterGroup>
          <FilterLabel>
            Alerts:
            <Combo name="Alerts" value="Add..." />
          </FilterLabel>
          <BarButton disabled>Go</BarButton>
        </FilterGroup>
        <BarDivider />
        <FilterGroup>
          <Combo name="Search term" value="Sear..." />
          <BarButton>Search</BarButton>
        </FilterGroup>
      </FilterBar>
      <NewsBody>
        <NewsPane>
          <NewsList>
            {headlines.map(([time, text], i) => (
              <NewsRow key={i} $h={leadRows[i]?.h ?? 19} $selected={i === SELECTED}>
                <span>{time && "26"}</span>
                <time>{time}</time>
                <Headline href="#" $size={leadRows[i]?.size ?? 14}>
                  {text}
                </Headline>
              </NewsRow>
            ))}
          </NewsList>
        </NewsPane>
        <PaneGrip>
          <svg width="3" height="24" viewBox="0 0 3 24">
            {[0, 5, 10, 15, 20].map((y) => (
              <g key={y}>
                <rect x="0" y={y} width="2" height="2" fill="#fff" />
                <rect x="1" y={y + 1} width="2" height="2" fill="#666" />
              </g>
            ))}
          </svg>
        </PaneGrip>
        <ScrollPad>
          <ScrollButton disabled aria-label="First">
            <svg width="11" height="9" viewBox="0 0 11 9">
              <path d="M0 0.5H11" stroke="currentColor" />
              <path d="M0 8L5.5 2.5L11 8Z" fill="currentColor" />
            </svg>
          </ScrollButton>
          <ScrollButton disabled aria-label="Page up">
            <svg width="11" height="9" viewBox="0 0 11 9">
              <path d="M0 8.5H11" stroke="currentColor" />
              <path d="M0 6L5.5 0.5L11 6Z" fill="currentColor" />
            </svg>
          </ScrollButton>
          <ScrollButton aria-label="Page down">
            <svg width="11" height="9" viewBox="0 0 11 9">
              <path d="M0 0.5H11" stroke="currentColor" />
              <path d="M0 2.5L5.5 8.5L11 2.5Z" fill="currentColor" />
            </svg>
          </ScrollButton>
        </ScrollPad>
      </NewsBody>
    </Window>
  );
}

/* ---------- App ---------- */

export default function App() {
  return (
    <AppFrame>
      <GlobalStyle />
      <TitleBar title="02:34:54   P1000 CQG FX   201773 - CQG FX 15.9804 Beta" active />
      <ToolBar>
        <MenuGroup>
          {menuItems.map((m) => (
            <MenuButton key={m}>{m}</MenuButton>
          ))}
        </MenuGroup>
        <ToolGroup>
          {toolClusters.map((cluster, i) => (
            <ToolCluster key={i}>
              {cluster.map((t, j) => (
                <ToolButton key={j} $w={t.w} $teal={t.teal} aria-label={t.name}>
                  {t.label}
                </ToolButton>
              ))}
            </ToolCluster>
          ))}
        </ToolGroup>
      </ToolBar>
      <Workspace>
        <Sidebar>
          <SideSection>
            <SideGroups groups={commandGroups} />
          </SideSection>
          <SideSection $gray>
            <SideGroups groups={studyGroups} />
          </SideSection>
        </Sidebar>
        <Desktop>
          <MainRow>
            <SpreadsheetWindow />
            <Column>
              <DomWindow
                symbol="DRUSDJPY"
                handle="120."
                bidPips={["34", "9"]}
                askPips={["35", "8"]}
                spread={["0.00", "9"]}
                bids={levels("120.", ["349", "348", "347", "346", "345", "344", "343", "342", "341"], ["100", "1000"])}
                asks={levels("120.", ["358", "359", "360", "361", "362", "363", "364", "365", "366"], ["200", "100", "800"])}
              />
              <DomWindow
                fill
                symbol="DREURUSD"
                handle="1.21"
                bidPips={["97", "8"]}
                askPips={["98", "6"]}
                spread={["0.0000", "8"]}
                bids={levels("1.21", ["978", "977", "976", "975", "974"], ["100", "900", "50"])}
                asks={levels("1.21", ["986", "988", "989", "990", "991"], ["100", "250"])}
              />
            </Column>
            <NewsWindow />
          </MainRow>
          <OrdersRow>
            <Window>
              <TitleBar title="Orders and Positions: offline" />
            </Window>
            <Window>
              <TitleBar title="Orders and Positions: offline" />
            </Window>
          </OrdersRow>
        </Desktop>
      </Workspace>
    </AppFrame>
  );
}
